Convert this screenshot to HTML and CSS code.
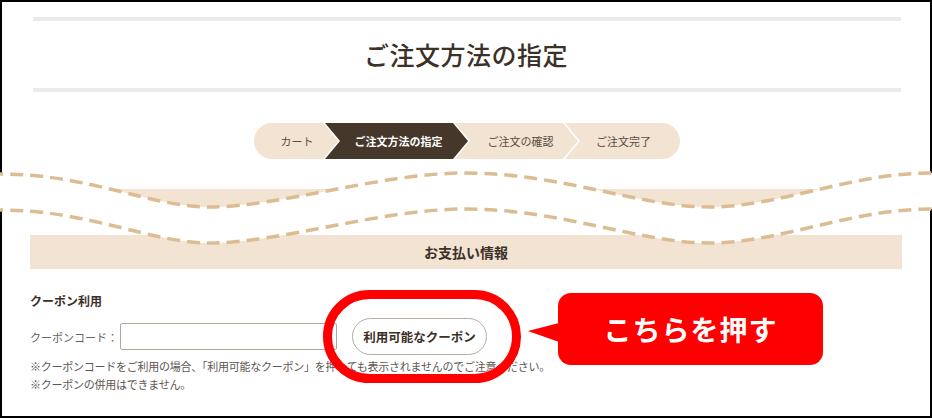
FILE: index.html
```html
<!DOCTYPE html>
<html lang="ja">
<head>
<meta charset="utf-8">
<title>ご注文方法の指定</title>
<link rel="stylesheet" href="styles.css">
</head>
<body>
<div class="page">
  <div class="frame">
    <div class="rule rule-top"></div>
    <h1 class="title">ご注文方法の指定</h1>
    <div class="rule"></div>
    <ol class="stepper">
      <li class="step step-1">カート</li>
      <li class="step step-2 is-current">ご注文方法の指定</li>
      <li class="step step-3">ご注文の確認</li>
      <li class="step step-4">ご注文完了</li>
    </ol>
    <div class="band-cut"></div>

    <h2 class="pay-head">お支払い情報</h2>
    <h3 class="coupon-title">クーポン利用</h3>
    <div class="coupon-row">
      <label class="coupon-label" for="code">クーポンコード：</label>
      <input class="coupon-input" id="code" type="text">
      <button class="coupon-btn" type="button">利用可能なクーポン</button>
    </div>
    <p class="note note-first">※クーポンコードをご利用の場合、「利用可能なクーポン」を押しても表示されませんのでご注意ください。</p>
    <p class="note">※クーポンの併用はできません。</p>
  </div>

  <svg class="tear" width="952" height="120" viewBox="-10 150 952 120" aria-hidden="true">
    <path class="tear-fill" d="M -10 174 L 0 174 C 90 174, 150 207, 210 207 C 280 207, 380 173, 466 173 C 560 173, 640 207, 709 207 C 780 207, 850 173, 932 173 L 942 173 L 942 209 L 932 209 C 850 209, 780 243, 709 243 C 640 243, 560 209, 466 209 C 380 209, 280 243, 210 243 C 150 243, 90 210, 0 210 L -10 210 Z"/>
    <path class="tear-line" d="M -10 174 L 0 174 C 90 174, 150 207, 210 207 C 280 207, 380 173, 466 173 C 560 173, 640 207, 709 207 C 780 207, 850 173, 932 173 L 942 173"/>
    <path class="tear-line" d="M -10 210 L 0 210 C 90 210, 150 243, 210 243 C 280 243, 380 209, 466 209 C 560 209, 640 243, 709 243 C 780 243, 850 209, 932 209 L 942 209"/>
  </svg>

  <div class="ring"></div>
  <div class="callout">こちらを押す</div>
</div>
</body>
</html>
```
FILE: styles.css
```css
* { box-sizing: border-box; }
html, body { margin: 0; padding: 0; background: #fff; }
body {
  font-family: "Noto Sans CJK JP", "Noto Sans", sans-serif;
  color: #3b3127;
}
.page {
  position: relative;
  width: 932px;
  height: 418px;
  overflow: hidden;
}
.frame {
  width: 932px;
  height: 418px;
  border: 2px solid #000;
  padding: 0 28px;
}
.rule {
  height: 4px;
  margin: 0 1px 0 3px;
  background: #ebebeb;
}
.rule-top { margin-top: 15px; }
.title {
  margin: 0;
  height: 67px;
  line-height: 67px;
  font-size: 25px;
  font-weight: 500;
  text-align: center;
  color: #3b3127;
  letter-spacing: 0.5px;
}
.stepper {
  list-style: none;
  margin: 31px 0 0 224px;
  padding: 0;
  width: 426px;
  height: 36px;
  display: flex;
  border-radius: 18px;
  overflow: hidden;
  background: #fff;
}
.step {
  height: 36px;
  display: flex;
  align-items: center;
  justify-content: center;
  font-size: 11px;
  color: #5b4c3d;
  background: #f2e3d3;
  margin-left: -15px;
  clip-path: polygon(0 0, calc(100% - 17px) 0, calc(100% - 2px) 50%, calc(100% - 17px) 100%, 0 100%, 15px 50%);
}
.step-1 {
  width: 86px;
  margin-left: 0;
  clip-path: polygon(0 0, calc(100% - 17px) 0, calc(100% - 2px) 50%, calc(100% - 17px) 100%, 0 100%);
}
.step-2 { width: 145px; padding-left: 2px; }
.step-3 { width: 125px; padding-left: 6px; }
.step-4 {
  width: 115px;
  padding-left: 2px;
  clip-path: polygon(0 0, 100% 0, 100% 100%, 0 100%, 15px 50%);
}
.is-current {
  background: #45382b;
  color: #fff;
  font-weight: 700;
}
.band-cut {
  margin-top: 30px;
  height: 19px;
  background: #f2e3d3;
}
.pay-head {
  margin: 27px 0 0;
  height: 34px;
  line-height: 34px;
  background: #f2e3d3;
  text-align: center;
  font-size: 14px;
  font-weight: 700;
  color: #3b3127;
}
.coupon-title {
  margin: 23px 0 0;
  font-size: 12px;
  line-height: 18px;
  font-weight: 700;
  color: #3b3127;
}
.coupon-row {
  margin-top: 8px;
  height: 37px;
  display: flex;
  align-items: center;
}
.coupon-label {
  width: 90px;
  font-size: 11px;
  color: #6b625a;
}
.coupon-input {
  width: 217px;
  height: 27px;
  border: 1px solid #b3a89c;
  border-radius: 2px;
  background: #fff;
}
.coupon-btn {
  margin-left: 15px;
  width: 135px;
  height: 37px;
  border: 1px solid #b8ada0;
  border-radius: 19px;
  background: #fff;
  font-family: inherit;
  font-size: 12.5px;
  font-weight: 700;
  color: #3b3127;
  padding: 0;
}
.note {
  margin: 0;
  font-size: 11px;
  line-height: 18px;
  color: #5e5650;
  letter-spacing: -0.25px;
}
.note-first { margin-top: 2px; }

.tear {
  position: absolute;
  left: -10px;
  top: 150px;
}
.tear-fill { fill: #fff; }
.tear-line {
  fill: none;
  stroke: #dcbd93;
  stroke-width: 3.5;
  stroke-dasharray: 13 7;
}
.ring {
  position: absolute;
  left: 323px;
  top: 290px;
  width: 198px;
  height: 93px;
  border: 9px solid #ff0000;
  border-radius: 47px;
}
.callout {
  position: absolute;
  left: 558px;
  top: 293px;
  width: 265px;
  height: 72px;
  background: #ff0000;
  border-radius: 13px;
  color: #fff;
  font-size: 28px;
  font-weight: 700;
  display: flex;
  align-items: center;
  justify-content: center;
  letter-spacing: 1px;
}
.callout::before {
  content: "";
  position: absolute;
  left: -30px;
  top: 30px;
  width: 31px;
  height: 19px;
  background: #ff0000;
  clip-path: polygon(0 8px, 100% 0, 100% 100%);
}
```
